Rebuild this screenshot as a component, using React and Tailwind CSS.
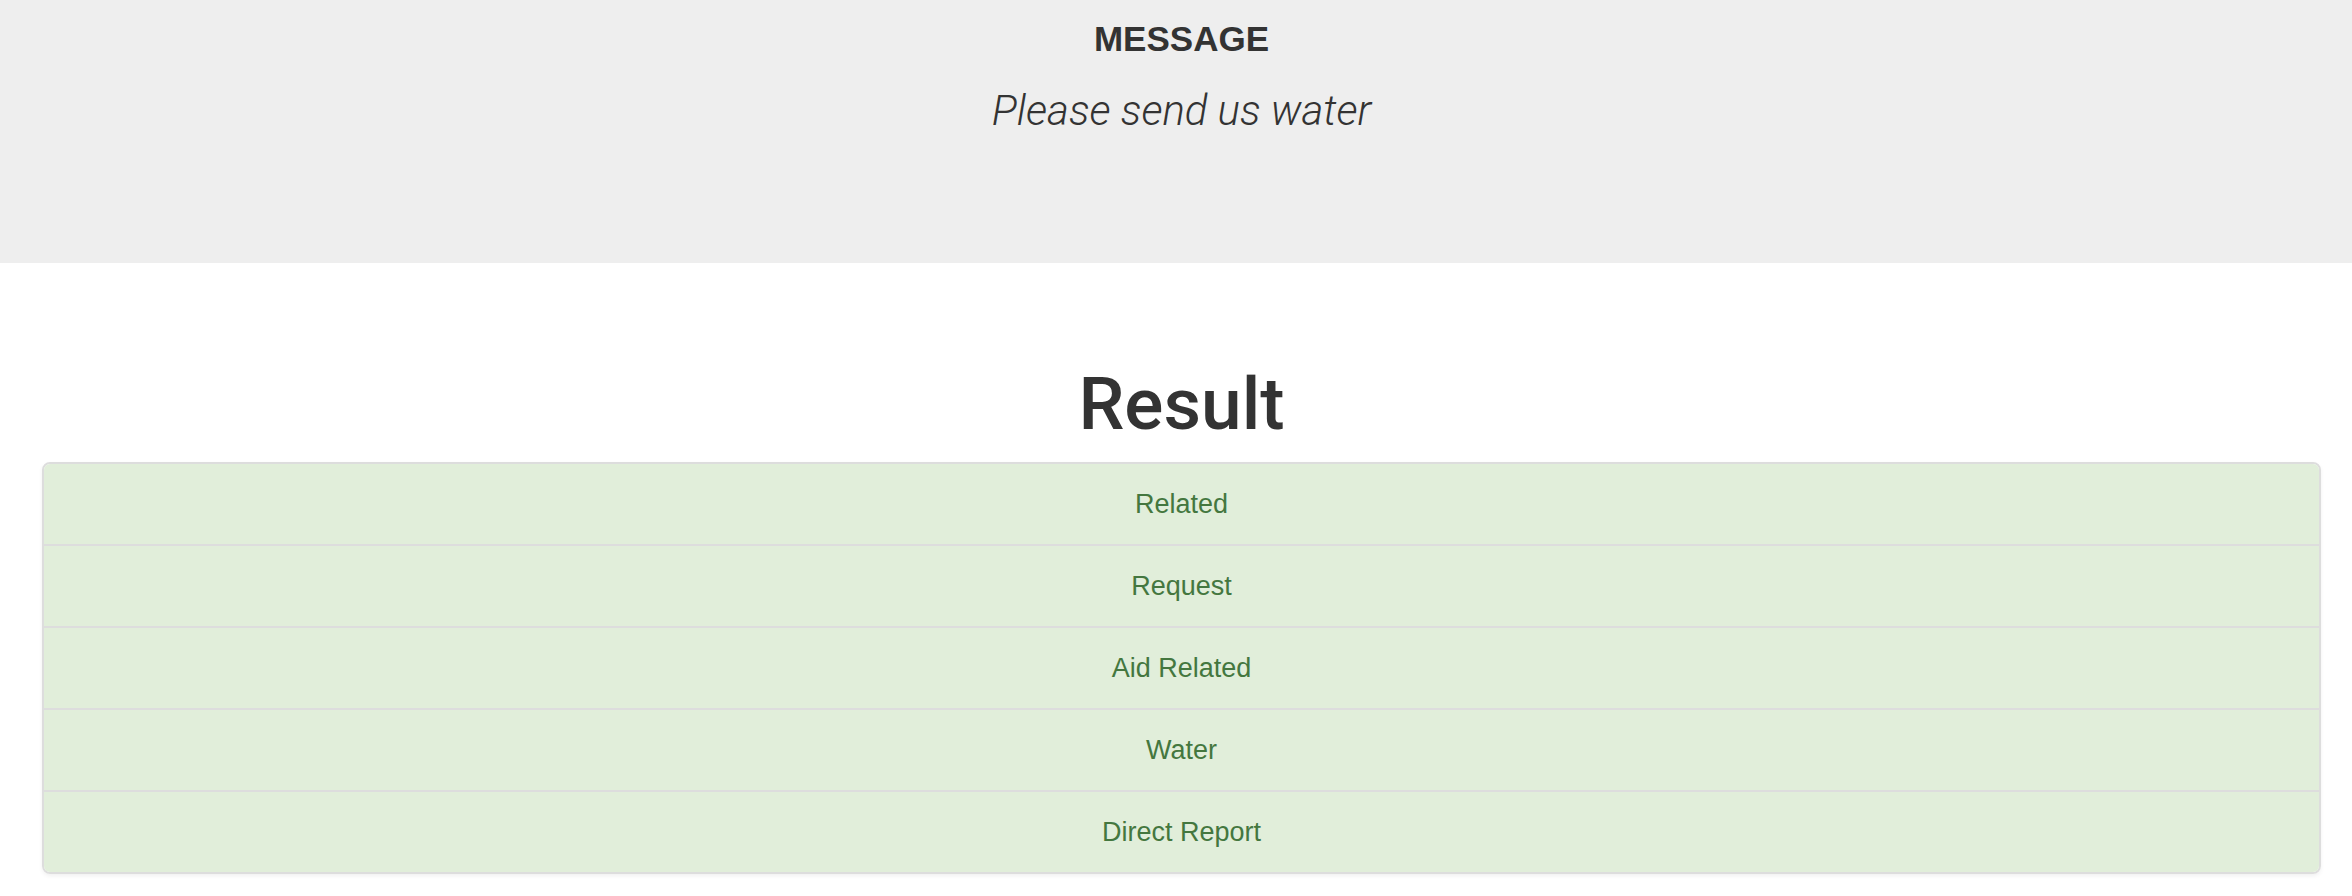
import React from 'react';

const categories = ['Related', 'Request', 'Aid Related', 'Water', 'Direct Report'];

export default function App() {
    return (
        <div className="min-h-screen bg-white text-[#333333] font-['Liberation_Sans',Arial,sans-serif]">
            {/* message banner */}
            <div className="h-[263px] bg-[#eeeeee] pl-[42px] pr-[31px]">
                <div className="flex flex-col items-center">
                    <h4 className="mt-[21px] text-[35px] leading-none font-bold">MESSAGE</h4>
                    <p className="mt-[34px] text-[42px] leading-none font-light italic font-['Roboto',sans-serif]">
                        Please send us water
                    </p>
                </div>
            </div>

            {/* result list */}
            <div className="pl-[42px] pr-[31px]">
                <h1 className="mt-[105px] mb-[21px] text-center text-[73px] leading-none font-medium font-['Roboto',sans-serif]">
                    Result
                </h1>
                <ul className="border-2 border-[#dddddd] rounded-lg overflow-hidden shadow-[0_2px_4px_rgba(0,0,0,0.06)]">
                    {categories.map((c) => (
                        <li
                            key={c}
                            className="h-[82px] last:h-[80px] flex items-center justify-center bg-[#e1eeda] text-[#44773f] text-[27px] border-b-2 last:border-b-0 border-[#dddddd]"
                        >
                            {c}
                        </li>
                    ))}
                </ul>
            </div>
        </div>
    );
}
